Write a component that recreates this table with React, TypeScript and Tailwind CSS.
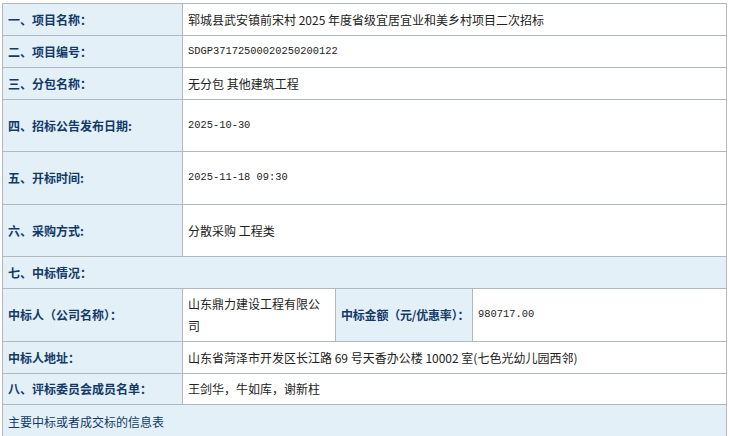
const cjk = { fontFamily: '"Noto Sans CJK SC", "Noto Sans", sans-serif' };

function Label({ children, className = "" }: { children: React.ReactNode; className?: string }) {
  return (
    <div
      className={
        "flex w-[180px] shrink-0 items-center border-r border-[#b3b8bd] bg-[#e4f0f8] pl-[5px] text-[12px] font-bold text-[#123a68] " +
        className
      }
    >
      {children}
    </div>
  );
}

function Value({ children, mono = false }: { children: React.ReactNode; mono?: boolean }) {
  return (
    <div
      className={
        "flex flex-1 items-center bg-white px-[5px] text-[#222] " +
        (mono ? "text-[10.4px]" : "text-[12px]")
      }
      style={mono ? { fontFamily: '"Liberation Mono", monospace' } : undefined}
    >
      {children}
    </div>
  );
}

const rows = [
  { label: "一、项目名称：", value: "郓城县武安镇前宋村 2025 年度省级宜居宜业和美乡村项目二次招标", h: "h-[32px]" },
  { label: "二、项目编号：", value: "SDGP37172500020250200122", h: "h-[32px]", mono: true },
  { label: "三、分包名称：", value: "无分包 其他建筑工程", h: "h-[32px]" },
  { label: "四、招标公告发布日期:", value: "2025-10-30", h: "h-[52px]", mono: true },
  { label: "五、开标时间:", value: "2025-11-18 09:30", h: "h-[53px]", mono: true },
  { label: "六、采购方式:", value: "分散采购 工程类", h: "h-[52px]" },
];

export default function App() {
  return (
    <div className="min-h-[436px] bg-white pl-[2px] pt-[3px]" style={cjk}>
      <div className="w-[725px] border-x border-t border-[#b3b8bd]">
        {rows.map(r => (
          <div key={r.label} className={"flex border-b border-[#b3b8bd] " + r.h}>
            <Label>{r.label}</Label>
            <Value mono={r.mono}>{r.value}</Value>
          </div>
        ))}

        <div className="flex h-[32px] items-center border-b border-[#b3b8bd] bg-[#e4f0f8] pl-[5px] text-[12px] font-bold text-[#123a68]">
          七、中标情况：
        </div>

        <div className="flex h-[53px] border-b border-[#b3b8bd]">
          <Label>中标人（公司名称）：</Label>
          <div className="flex w-[153px] shrink-0 items-center border-r border-[#b3b8bd] bg-white px-[5px] text-[12px] leading-[22px] text-[#222]">
            山东鼎力建设工程有限公司
          </div>
          <div className="flex w-[137px] shrink-0 items-center overflow-hidden whitespace-nowrap border-r border-[#b3b8bd] bg-[#e4f0f8] pl-[5px] text-[12px] font-bold tracking-[-0.2px] text-[#123a68]">
            中标金额（元/优惠率）：
          </div>
          <Value mono>980717.00</Value>
        </div>

        <div className="flex h-[32px] border-b border-[#b3b8bd]">
          <Label>中标人地址：</Label>
          <Value>山东省菏泽市开发区长江路 69 号天香办公楼 10002 室(七色光幼儿园西邻)</Value>
        </div>

        <div className="flex h-[31px] border-b border-[#b3b8bd]">
          <Label>八、评标委员会成员名单：</Label>
          <Value>王剑华，牛如库，谢新柱</Value>
        </div>

        <div className="flex h-[34px] items-center bg-[#e4f0f8] pl-[5px] text-[12px] text-[#123a68]">
          主要中标或者成交标的信息表
        </div>
      </div>
    </div>
  );
}
